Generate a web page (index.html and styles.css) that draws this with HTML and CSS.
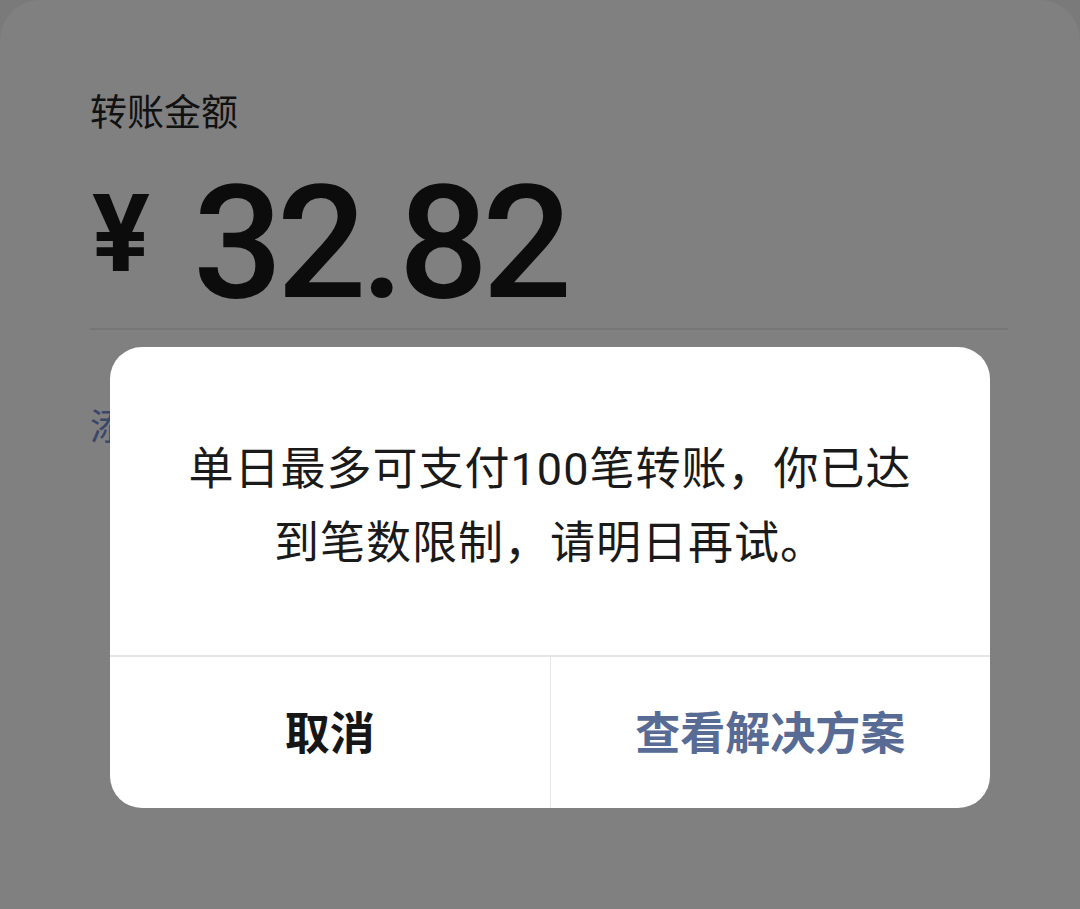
FILE: index.html
```html
<!DOCTYPE html>
<html lang="zh-CN">
<head>
<meta charset="utf-8">
<link rel="stylesheet" href="styles.css">
</head>
<body>
<div class="sheet">
  <div class="label">转账金额</div>
  <div class="amount"><span class="yen">¥</span><span class="num">32.82</span></div>
  <div class="divider"></div>
  <div class="link">添加转账说明</div>
</div>
<div class="dialog">
  <div class="msg">单日最多可支付100笔转账，你已达<br>到笔数限制，请明日再试。</div>
  <div class="actions">
    <div class="btn cancel">取消</div>
    <div class="btn primary">查看解决方案</div>
  </div>
</div>
</body>
</html>
```
FILE: styles.css
```css
html, body {
  margin: 0;
  padding: 0;
}
body {
  width: 1080px;
  height: 909px;
  background: #7a7a7a;
  overflow: hidden;
  position: relative;
  font-family: "Roboto", "Noto Sans CJK SC", sans-serif;
}
.sheet {
  background: #808080;
  height: 909px;
  border-radius: 40px 40px 0 0;
  padding: 0 72px 0 90px;
  box-sizing: border-box;
  display: flex;
  flex-direction: column;
}
.label {
  margin-top: 86px;
  font-size: 37px;
  line-height: 48px;
  color: #111;
  font-family: "Noto Sans CJK SC", sans-serif;
}
.amount {
  display: flex;
  align-items: flex-start;
  margin-top: 44px;
  height: 130px;
  color: #0c0c0c;
}
.yen {
  font-family: "Roboto", sans-serif;
  font-weight: 700;
  font-size: 108px;
  line-height: 108px;
  margin-left: 2px;
  margin-top: 2px;
  width: 101px;
}
.num {
  font-family: "Roboto", sans-serif;
  font-weight: 500;
  font-size: 158px;
  line-height: 130px;
  letter-spacing: -6px;
}
.divider {
  margin-top: 20px;
  height: 2px;
  background: #767676;
}
.link {
  margin-top: 74px;
  font-size: 36px;
  line-height: 40px;
  color: #3a4769;
  font-family: "Noto Sans CJK SC", sans-serif;
}
.dialog {
  position: absolute;
  left: 110px;
  top: 347px;
  width: 880px;
  height: 461px;
  background: #fff;
  border-radius: 32px;
  display: flex;
  flex-direction: column;
  overflow: hidden;
}
.msg {
  height: 310px;
  box-sizing: border-box;
  padding-top: 86px;
  text-align: center;
  font-size: 45px;
  line-height: 74px;
  letter-spacing: 1px;
  color: #1a1a1a;
  border-bottom: 2px solid #e6e6e6;
}
.actions {
  flex: 1;
  display: flex;
}
.btn {
  flex: 1;
  display: flex;
  align-items: center;
  justify-content: center;
  font-family: "Noto Sans CJK SC", sans-serif;
  font-weight: 700;
  font-size: 45px;
  padding-bottom: 4px;
}
.cancel {
  color: #161616;
  border-right: 1px solid #e6e6e6;
}
.primary {
  color: #576b95;
}
```
